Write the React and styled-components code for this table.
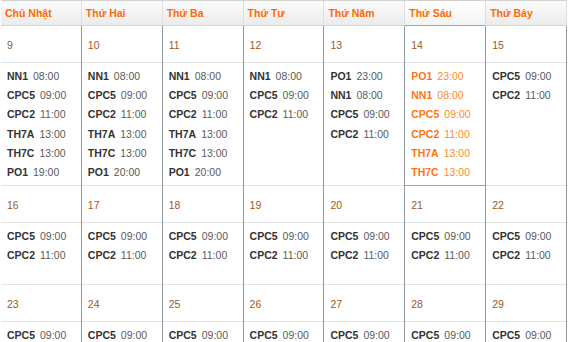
import React from "react";
import styled, { createGlobalStyle } from "styled-components";

const days = ["Chủ Nhật", "Thứ Hai", "Thứ Ba", "Thứ Tư", "Thứ Năm", "Thứ Sáu", "Thứ Bảy"];

const ACTIVE_COL = 5;

const basic = [
  ["CPC5", "09:00"],
  ["CPC2", "11:00"],
];

const weeks = [
  [
    { date: 9, events: [["NN1", "08:00"], ["CPC5", "09:00"], ["CPC2", "11:00"], ["TH7A", "13:00"], ["TH7C", "13:00"], ["PO1", "19:00"]] },
    { date: 10, events: [["NN1", "08:00"], ["CPC5", "09:00"], ["CPC2", "11:00"], ["TH7A", "13:00"], ["TH7C", "13:00"], ["PO1", "20:00"]] },
    { date: 11, events: [["NN1", "08:00"], ["CPC5", "09:00"], ["CPC2", "11:00"], ["TH7A", "13:00"], ["TH7C", "13:00"], ["PO1", "20:00"]] },
    { date: 12, events: [["NN1", "08:00"], ["CPC5", "09:00"], ["CPC2", "11:00"]] },
    { date: 13, events: [["PO1", "23:00"], ["NN1", "08:00"], ["CPC5", "09:00"], ["CPC2", "11:00"]] },
    { date: 14, active: true, events: [["PO1", "23:00"], ["NN1", "08:00"], ["CPC5", "09:00"], ["CPC2", "11:00"], ["TH7A", "13:00"], ["TH7C", "13:00"]] },
    { date: 15, events: basic },
  ],
  [16, 17, 18, 19, 20, 21, 22].map((d) => ({ date: d, events: basic })),
  [23, 24, 25, 26, 27, 28, 29].map((d) => ({ date: d, events: basic })),
];

const App = () => {
  return (
    <>
      <GlobalStyle />
      <Calendar>
        <HeaderRow>
          {days.map((d, i) => (
            <HeadCell key={d} $active={i === ACTIVE_COL}>
              {d}
            </HeadCell>
          ))}
        </HeaderRow>
        {weeks.map((week, wi) => (
          <Week key={wi}>
            {week.map((day) => (
              <Day key={day.date}>
                <DateCell>{day.date}</DateCell>
                <EventList $active={day.active}>
                  {day.events.map(([name, time], k) => (
                    <Event key={k} $active={day.active}>
                      <b>{name}</b>
                      <span>{time}</span>
                    </Event>
                  ))}
                </EventList>
              </Day>
            ))}
          </Week>
        ))}
      </Calendar>
    </>
  );
};

export default App;

const GlobalStyle = createGlobalStyle`
  body {
    margin: 0;
    background: #fff;
    font-family: "Liberation Sans", Arial, sans-serif;
    overflow: hidden;
  }
`;

const Calendar = styled.div`
  width: 566px;
  margin-left: 1px;
  font-size: 10.5px;
`;

const HeaderRow = styled.div`
  display: grid;
  grid-template-columns: repeat(7, 1fr);
  height: 24px;
  border-top: 1px solid #d2d2d2;
  border-bottom: 1px solid #d4d4d4;
  background: linear-gradient(#fcfcfc, #ebebeb);
`;

const HeadCell = styled.div`
  padding: 0 4px;
  line-height: 24px;
  font-weight: bold;
  color: #ff6a00;
  border-right: 1px solid #dedede;
  box-shadow: ${(p) => (p.$active ? "inset 0 -1px 0 #ff8c2e" : "none")};
  background: ${(p) => (p.$active ? "linear-gradient(#ffffff, #f3f3f3)" : "transparent")};
  margin-bottom: ${(p) => (p.$active ? "-1px" : "0")};
  white-space: nowrap;
`;

const Week = styled.div`
  display: grid;
  grid-template-columns: repeat(7, 1fr);
`;

const Day = styled.div`
  display: flex;
  flex-direction: column;
  border-right: 1px solid #8f99a2;
`;

const DateCell = styled.div`
  height: 37px;
  padding: 1px 6px 0;
  line-height: 36px;
  color: #9c5a1e;
  border-bottom: 1px solid #e3e3e3;
  box-sizing: border-box;
`;

const EventList = styled.div`
  flex: 1;
  box-sizing: border-box;
  min-height: 62px;
  padding: 4px 6px 3px;
  border-bottom: 1px solid ${(p) => (p.$active ? "#ff8c2e" : "#e3e3e3")};
`;

const Event = styled.div`
  line-height: 19.2px;
  white-space: nowrap;

  b {
    color: ${(p) => (p.$active ? "#ff7410" : "#333")};
  }

  span {
    margin-left: 5px;
    color: ${(p) => (p.$active ? "#ff8a2b" : "#5a5a5a")};
  }
`;
